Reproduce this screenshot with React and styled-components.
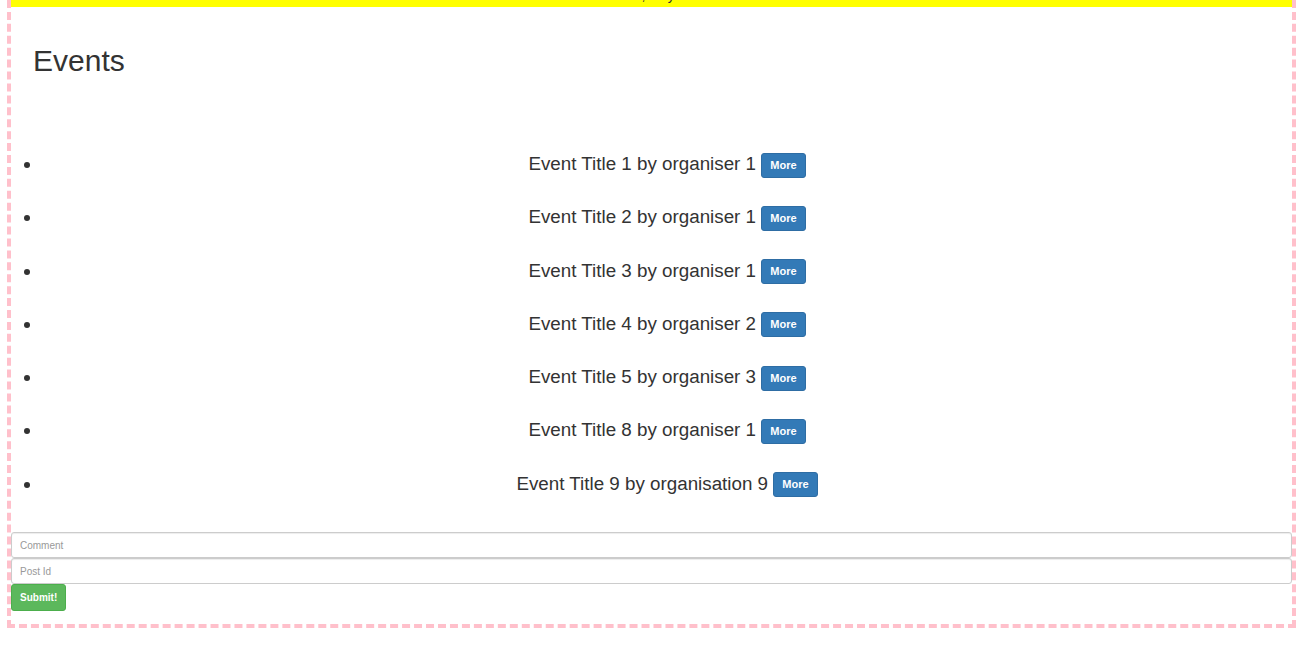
import React from "react";
import styled, { createGlobalStyle } from "styled-components";

const GlobalStyle = createGlobalStyle`
  body {
    margin: 0;
    background: #fff;
    font-family: "Liberation Sans", Arial, Helvetica, sans-serif;
    color: #333;
  }
`;

const Page = styled.div`
  margin: 0 4px 21px 7px;
  border: 4px dashed pink;
  border-top: none;
  padding-bottom: 13px;
`;

const Banner = styled.div`
  height: 7px;
  overflow: hidden;
  background: yellow;
`;

const BannerText = styled.div`
  margin-top: -15px;
  font-size: 14px;
  line-height: 20px;
  text-align: center;
  color: #333;
`;

const Title = styled.h2`
  margin: 37px 0 0;
  padding-left: 22px;
  font-size: 30px;
  font-weight: 500;
  line-height: 33px;
  color: #333;
`;

const EventList = styled.ul`
  margin: 60px 0 22px;
  padding-left: 31px;
`;

const EventItem = styled.li`
  padding: 10px 0;
  font-size: 18.8px;
  line-height: 33.3px;
  text-align: center;
  color: #333;
`;

const Button = styled.button`
  display: inline-block;
  vertical-align: middle;
  padding: ${({ $pad }) => $pad || "4px 8px"};
  font-family: inherit;
  font-size: ${({ $size }) => $size || "11px"};
  font-weight: 700;
  line-height: 15px;
  color: #fff;
  background: ${({ $variant }) => ($variant === "success" ? "#5cb85c" : "#337ab7")};
  border: 1px solid ${({ $variant }) => ($variant === "success" ? "#4cae4c" : "#2e6da4")};
  border-radius: 3px;
  cursor: pointer;
`;

const Form = styled.form`
  display: flex;
  flex-direction: column;
  align-items: flex-start;
`;

const Input = styled.input`
  box-sizing: border-box;
  width: 100%;
  height: 26px;
  padding: 0 8px;
  font-family: inherit;
  font-size: 10px;
  color: #555;
  border: 1px solid #ccc;
  border-radius: 3px;
  box-shadow: inset 0 1px 1px rgba(0, 0, 0, 0.075);

  &::placeholder {
    color: #999;
  }
`;

const events = [
  { id: 1, title: "Event Title 1", by: "organiser 1" },
  { id: 2, title: "Event Title 2", by: "organiser 1" },
  { id: 3, title: "Event Title 3", by: "organiser 1" },
  { id: 4, title: "Event Title 4", by: "organiser 2" },
  { id: 5, title: "Event Title 5", by: "organiser 3" },
  { id: 8, title: "Event Title 8", by: "organiser 1" },
  { id: 9, title: "Event Title 9", by: "organisation 9" },
];

function App() {
  return (
    <>
      <GlobalStyle />
      <Page>
        <Banner>
          <BannerText>Hi, Guy</BannerText>
        </Banner>
        <Title>Events</Title>
        <EventList>
          {events.map((ev) => (
            <EventItem key={ev.id}>
              {ev.title} by {ev.by} <Button type="button">More</Button>
            </EventItem>
          ))}
        </EventList>
        <Form onSubmit={(e) => e.preventDefault()}>
          <Input placeholder="Comment" />
          <Input placeholder="Post Id" />
          <Button $variant="success" $pad="5px 8px" $size="10px" type="submit">
            Submit!
          </Button>
        </Form>
      </Page>
    </>
  );
}

export default App;
